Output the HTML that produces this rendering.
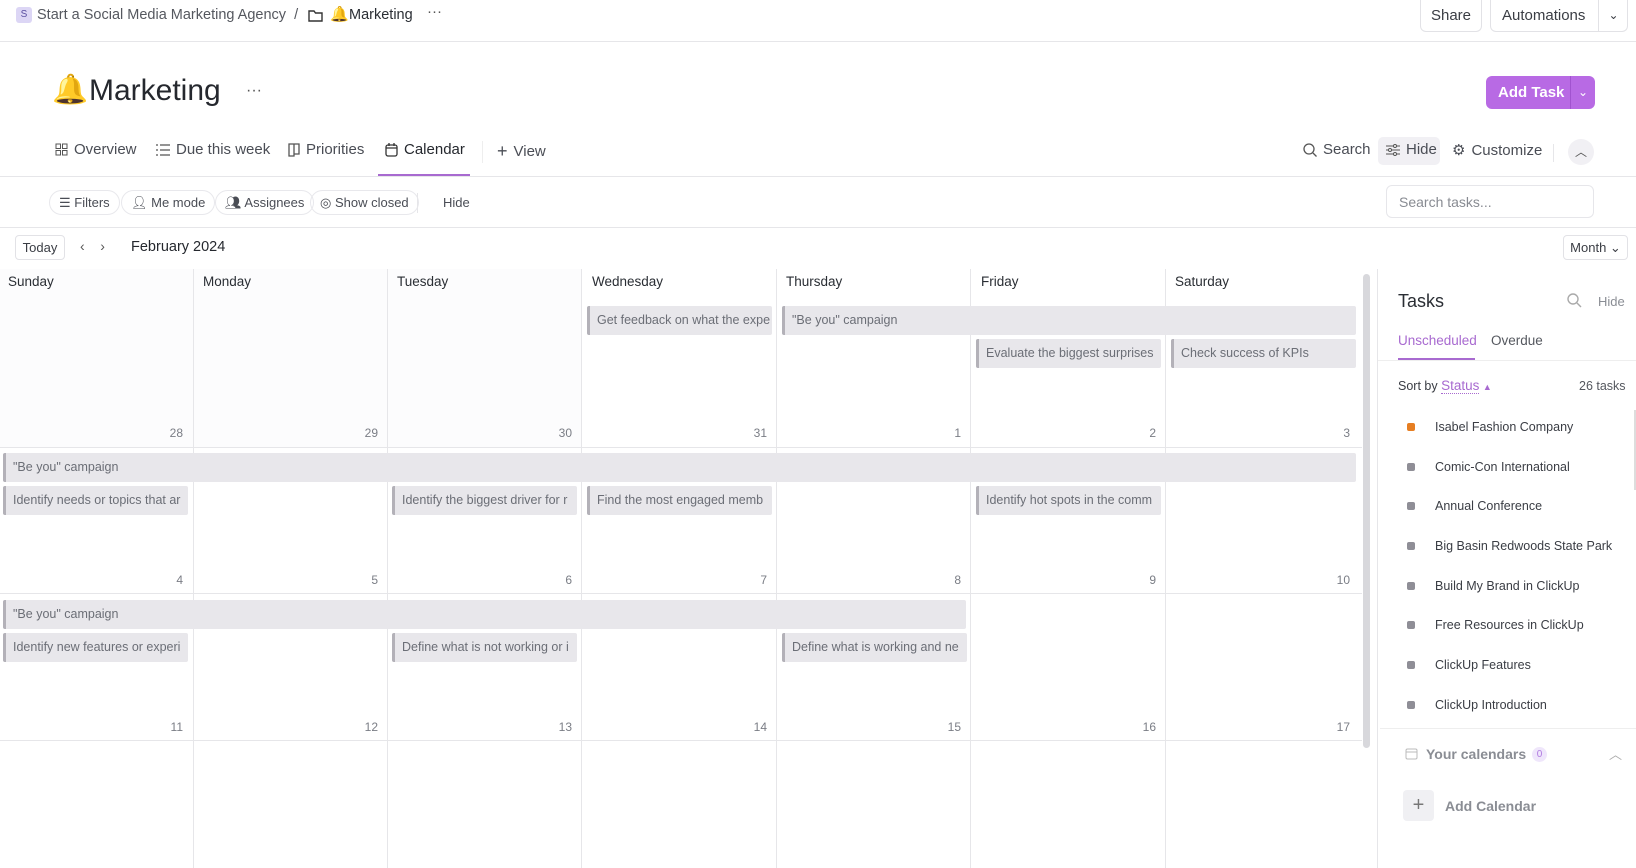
<!DOCTYPE html>
<html><head><meta charset="utf-8"><style>
*{box-sizing:border-box;margin:0;padding:0}
body{width:1636px;height:868px;overflow:hidden;background:#fff;font-family:"Liberation Sans",sans-serif;color:#2a2e34;position:relative}
.a{position:absolute;white-space:nowrap}
.line{position:absolute;background:#e6e6e9}
.btn{position:absolute;border:1px solid #e2e2e6;border-radius:6px;font-size:15px;color:#3a3d44;display:flex;align-items:center;justify-content:center}
.tab{position:absolute;top:141px;font-size:15px;color:#4a4d55;display:flex;align-items:center;gap:6px}
.pill{position:absolute;top:190px;height:25px;border:1px solid #e8e8ec;border-radius:13px;font-size:13px;color:#4a4d55;display:flex;align-items:center;gap:5px;padding:0 9px}
.dh{position:absolute;top:274px;font-size:13.5px;color:#2a2e34}
.dn{position:absolute;font-size:12px;color:#7a7d85;text-align:right;width:30px}
.ev{position:absolute;height:29px;background:#e8e7eb;border-left:3px solid #b3b1b8;border-radius:2px;font-size:12.5px;color:#6b6e76;line-height:29px;padding-left:7px;overflow:hidden;white-space:nowrap}
.ti{position:absolute;left:1435px;font-size:12.5px;color:#3a3d44}
.ti:before{content:"";position:absolute;left:-28px;top:3px;width:8px;height:8px;border-radius:2px;background:#8f8e96}
.ti.o:before{background:#e67e22}
</style></head><body>
<!-- top bar -->
<div class="a" style="left:16px;top:7px;width:16px;height:16px;background:#dcd6f5;border-radius:3px;font-size:10px;color:#5a4fa0;text-align:center;line-height:16px">S</div>
<div class="a" style="left:37px;top:7px;font-size:14.5px;color:#55585f">Start a Social Media Marketing Agency &nbsp;/</div>
<svg class="a" style="left:308px;top:9px" width="15" height="13" viewBox="0 0 15 13"><path d="M1 2h5l1.5 2H14v8H1z" fill="none" stroke="#333" stroke-width="1.4"/></svg>
<div class="a" style="left:330px;top:5px;font-size:15px">🔔</div>
<div class="a" style="left:349px;top:7px;font-size:14.5px;color:#2a2e34">Marketing</div>
<div class="a" style="left:427px;top:3px;font-size:15px;color:#555">···</div>
<div class="btn" style="left:1420px;top:0;width:62px;height:32px;border-top:none;border-radius:0 0 6px 6px">Share</div>
<div class="btn" style="left:1490px;top:0;width:138px;height:32px;border-top:none;border-radius:0 0 6px 6px;justify-content:flex-start;padding-left:11px">Automations<span style="position:absolute;left:107px;top:0;bottom:0;border-left:1px solid #e2e2e6;width:30px;text-align:center;line-height:30px;font-size:12px">⌄</span></div>
<div class="line" style="left:0;top:41px;width:1636px;height:1px"></div>
<!-- title -->
<div class="a" style="left:52px;top:73px;font-size:29px">🔔</div>
<div class="a" style="left:89px;top:74px;font-size:30px;font-weight:500;color:#25282e">Marketing</div>
<div class="a" style="left:246px;top:82px;font-size:16px;color:#555">···</div>
<div class="a" style="left:1486px;top:76px;width:109px;height:33px;background:#b86ae4;border-radius:6px;color:#fff;font-weight:bold;font-size:15px;line-height:33px;padding-left:12px">Add Task<span style="position:absolute;left:84px;top:0;bottom:0;border-left:1px solid #a153cf;width:25px;text-align:center;font-weight:normal;font-size:12px">⌄</span></div>
<!-- tabs -->
<div class="tab" style="left:55px"><svg width="13" height="13"><rect x="1" y="1" width="4.5" height="4.5" fill="none" stroke="#555"/><rect x="7.5" y="1" width="4.5" height="4.5" fill="none" stroke="#555"/><rect x="1" y="7.5" width="4.5" height="4.5" fill="none" stroke="#555"/><rect x="7.5" y="7.5" width="4.5" height="4.5" fill="none" stroke="#555"/></svg>Overview</div>
<div class="tab" style="left:156px"><svg width="14" height="12"><path d="M0 1h2M4 1h10M0 6h2M4 6h10M0 11h2M4 11h10" stroke="#555" stroke-width="1.3"/></svg>Due this week</div>
<div class="tab" style="left:288px"><svg width="12" height="14"><path d="M1 1h10v10H6v2H1z M6 1v10" fill="none" stroke="#555" stroke-width="1.3"/></svg>Priorities</div>
<div class="tab" style="left:385px;color:#25282e"><svg width="13" height="14"><rect x="1" y="2" width="11" height="11" rx="2" fill="none" stroke="#333" stroke-width="1.3"/><path d="M1 5h11M4 0v3M9 0v3" stroke="#333" stroke-width="1.3"/></svg>Calendar</div>
<div class="a" style="left:378px;top:174px;width:92px;height:2px;background:#a86ad0"></div>
<div class="line" style="left:482px;top:141px;width:1px;height:22px;background:#eee"></div>
<div class="tab" style="left:497px"><span style="font-size:18px;font-weight:300">+</span>View</div>
<div class="tab" style="left:1303px"><svg width="14" height="14"><circle cx="6" cy="6" r="5" fill="none" stroke="#555" stroke-width="1.3"/><path d="M10 10l3.5 3.5" stroke="#555" stroke-width="1.3"/></svg>Search</div>
<div class="a" style="left:1378px;top:137px;width:62px;height:28px;background:#f1f0f4;border-radius:5px"></div>
<div class="tab" style="left:1386px"><svg width="14" height="12"><path d="M0 2h14M0 6h14M0 10h14" stroke="#555" stroke-width="1.1"/><circle cx="9" cy="2" r="1.5" fill="#fff" stroke="#555"/><circle cx="4" cy="6" r="1.5" fill="#fff" stroke="#555"/><circle cx="9" cy="10" r="1.5" fill="#fff" stroke="#555"/></svg>Hide</div>
<div class="tab" style="left:1452px"><span style="font-size:15px">⚙</span>Customize</div>
<div class="line" style="left:1553px;top:144px;width:1px;height:18px"></div>
<div class="a" style="left:1568px;top:139px;width:26px;height:26px;border-radius:13px;background:#f1f0f4;text-align:center;font-size:12px;line-height:26px;color:#555">︿</div>
<div class="line" style="left:0;top:176px;width:1636px;height:1px"></div>
<!-- filters -->
<div class="pill" style="left:49px">☰ Filters</div>
<div class="pill" style="left:121px">👤︎ Me mode</div>
<div class="pill" style="left:215px">👥︎ Assignees</div>
<div class="pill" style="left:310px">◎ Show closed</div>
<div class="line" style="left:417px;top:193px;width:1px;height:20px"></div>
<div class="a" style="left:443px;top:195px;font-size:13px;color:#4a4d55">Hide</div>
<div class="a" style="left:1386px;top:185px;width:208px;height:33px;border:1px solid #e6e6ea;border-radius:6px;font-size:14px;color:#888b92;padding:8px 12px">Search tasks...</div>
<div class="line" style="left:0;top:227px;width:1636px;height:1px"></div>
<!-- nav -->
<div class="btn" style="left:15px;top:235px;width:50px;height:25px;font-size:13px;border-radius:4px">Today</div>
<div class="a" style="left:80px;top:238px;font-size:14px;color:#555">‹ &nbsp;&nbsp; ›</div>
<div class="a" style="left:131px;top:239px;font-size:14.5px;color:#25282e">February 2024</div>
<div class="btn" style="left:1563px;top:235px;width:65px;height:25px;font-size:13px;border-radius:4px">Month ⌄</div>
<!-- calendar grid -->
<div class="a" style="left:0;top:269px;width:1362px;height:599px;background:#fff"></div>
<div class="a" style="left:0;top:269px;width:581px;height:178px;background:#fcfcfd"></div>
<div class="line" style="left:193px;top:269px;width:1px;height:599px"></div>
<div class="line" style="left:387px;top:269px;width:1px;height:599px"></div>
<div class="line" style="left:581px;top:269px;width:1px;height:599px"></div>
<div class="line" style="left:776px;top:269px;width:1px;height:599px"></div>
<div class="line" style="left:970px;top:269px;width:1px;height:599px"></div>
<div class="line" style="left:1165px;top:269px;width:1px;height:599px"></div>
<div class="line" style="left:0;top:447px;width:1362px;height:1px"></div>
<div class="line" style="left:0;top:593px;width:1362px;height:1px"></div>
<div class="line" style="left:0;top:740px;width:1362px;height:1px"></div>
<div class="a" style="left:1363px;top:274px;width:7px;height:474px;background:#d8d8dc;border-radius:4px"></div>
<div class="line" style="left:1377px;top:269px;width:1px;height:599px"></div>
<div class="dh" style="left:8px">Sunday</div><div class="dh" style="left:203px">Monday</div><div class="dh" style="left:397px">Tuesday</div><div class="dh" style="left:592px">Wednesday</div><div class="dh" style="left:786px">Thursday</div><div class="dh" style="left:981px">Friday</div><div class="dh" style="left:1175px">Saturday</div>
<div class="dn" style="left:153px;top:426px">28</div><div class="dn" style="left:348px;top:426px">29</div><div class="dn" style="left:542px;top:426px">30</div><div class="dn" style="left:737px;top:426px">31</div><div class="dn" style="left:931px;top:426px">1</div><div class="dn" style="left:1126px;top:426px">2</div><div class="dn" style="left:1320px;top:426px">3</div>
<div class="dn" style="left:153px;top:573px">4</div><div class="dn" style="left:348px;top:573px">5</div><div class="dn" style="left:542px;top:573px">6</div><div class="dn" style="left:737px;top:573px">7</div><div class="dn" style="left:931px;top:573px">8</div><div class="dn" style="left:1126px;top:573px">9</div><div class="dn" style="left:1320px;top:573px">10</div>
<div class="dn" style="left:153px;top:720px">11</div><div class="dn" style="left:348px;top:720px">12</div><div class="dn" style="left:542px;top:720px">13</div><div class="dn" style="left:737px;top:720px">14</div><div class="dn" style="left:931px;top:720px">15</div><div class="dn" style="left:1126px;top:720px">16</div><div class="dn" style="left:1320px;top:720px">17</div>
<div class="ev" style="left:587px;top:306px;width:185px">Get feedback on what the expe</div>
<div class="ev" style="left:782px;top:306px;width:574px">"Be you" campaign</div>
<div class="ev" style="left:976px;top:339px;width:185px">Evaluate the biggest surprises</div>
<div class="ev" style="left:1171px;top:339px;width:185px">Check success of KPIs</div>
<div class="ev" style="left:3px;top:453px;width:1353px">"Be you" campaign</div>
<div class="ev" style="left:3px;top:486px;width:185px">Identify needs or topics that ar</div>
<div class="ev" style="left:392px;top:486px;width:185px">Identify the biggest driver for r</div>
<div class="ev" style="left:587px;top:486px;width:185px">Find the most engaged memb</div>
<div class="ev" style="left:976px;top:486px;width:185px">Identify hot spots in the comm</div>
<div class="ev" style="left:3px;top:600px;width:963px">"Be you" campaign</div>
<div class="ev" style="left:3px;top:633px;width:185px">Identify new features or experi</div>
<div class="ev" style="left:392px;top:633px;width:185px">Define what is not working or i</div>
<div class="ev" style="left:782px;top:633px;width:185px">Define what is working and ne</div>
<!-- right panel -->
<div class="a" style="left:1398px;top:291px;font-size:18px;color:#2a2e34">Tasks</div>
<svg class="a" style="left:1567px;top:293px" width="15" height="15"><circle cx="6" cy="6" r="5" fill="none" stroke="#aaa" stroke-width="1.4"/><path d="M10 10l4 4" stroke="#aaa" stroke-width="1.4"/></svg>
<div class="a" style="left:1598px;top:294px;font-size:13px;color:#8a8d94">Hide</div>
<div class="a" style="left:1398px;top:333px;font-size:13.5px;color:#a86ad0">Unscheduled</div>
<div class="a" style="left:1491px;top:333px;font-size:13.5px;color:#55585f">Overdue</div>
<div class="a" style="left:1398px;top:358px;width:77px;height:2px;background:#a86ad0"></div>
<div class="line" style="left:1378px;top:360px;width:258px;height:1px;background:#eee"></div>
<div class="a" style="left:1398px;top:378px;font-size:12.5px;color:#3a3d44">Sort by <span style="color:#a86ad0;font-size:13.5px;border-bottom:1px dotted #a86ad0">Status</span> <span style="color:#a86ad0;font-size:9px">▲</span></div>
<div class="a" style="left:1579px;top:379px;font-size:12.5px;color:#55585f">26 tasks</div>
<div class="ti o" style="top:420px">Isabel Fashion Company</div>
<div class="ti" style="top:460px">Comic-Con International</div>
<div class="ti" style="top:499px">Annual Conference</div>
<div class="ti" style="top:539px">Big Basin Redwoods State Park</div>
<div class="ti" style="top:579px">Build My Brand in ClickUp</div>
<div class="ti" style="top:618px">Free Resources in ClickUp</div>
<div class="ti" style="top:658px">ClickUp Features</div>
<div class="ti" style="top:698px">ClickUp Introduction</div>
<div class="a" style="left:1634px;top:410px;width:2px;height:80px;background:#ddd"></div>
<div class="line" style="left:1380px;top:728px;width:256px;height:1px;background:#eee"></div>
<svg class="a" style="left:1405px;top:747px" width="13" height="13"><rect x="1" y="2" width="11" height="10" rx="1.5" fill="none" stroke="#bbb"/><path d="M1 5h11" stroke="#bbb"/></svg>
<div class="a" style="left:1426px;top:746px;font-size:14px;font-weight:bold;color:#8a8d94">Your calendars</div>
<div class="a" style="left:1532px;top:747px;width:15px;height:15px;border-radius:8px;background:#efe6fb;color:#b07ae0;font-size:10px;text-align:center;line-height:15px">0</div>
<div class="a" style="left:1609px;top:744px;font-size:13px;color:#aaa">︿</div>
<div class="a" style="left:1403px;top:790px;width:31px;height:31px;background:#f0f0f3;border-radius:4px;text-align:center;line-height:30px;font-size:20px;color:#777">+</div>
<div class="a" style="left:1445px;top:798px;font-size:14px;font-weight:bold;color:#8a8d94">Add Calendar</div>
</body></html>
